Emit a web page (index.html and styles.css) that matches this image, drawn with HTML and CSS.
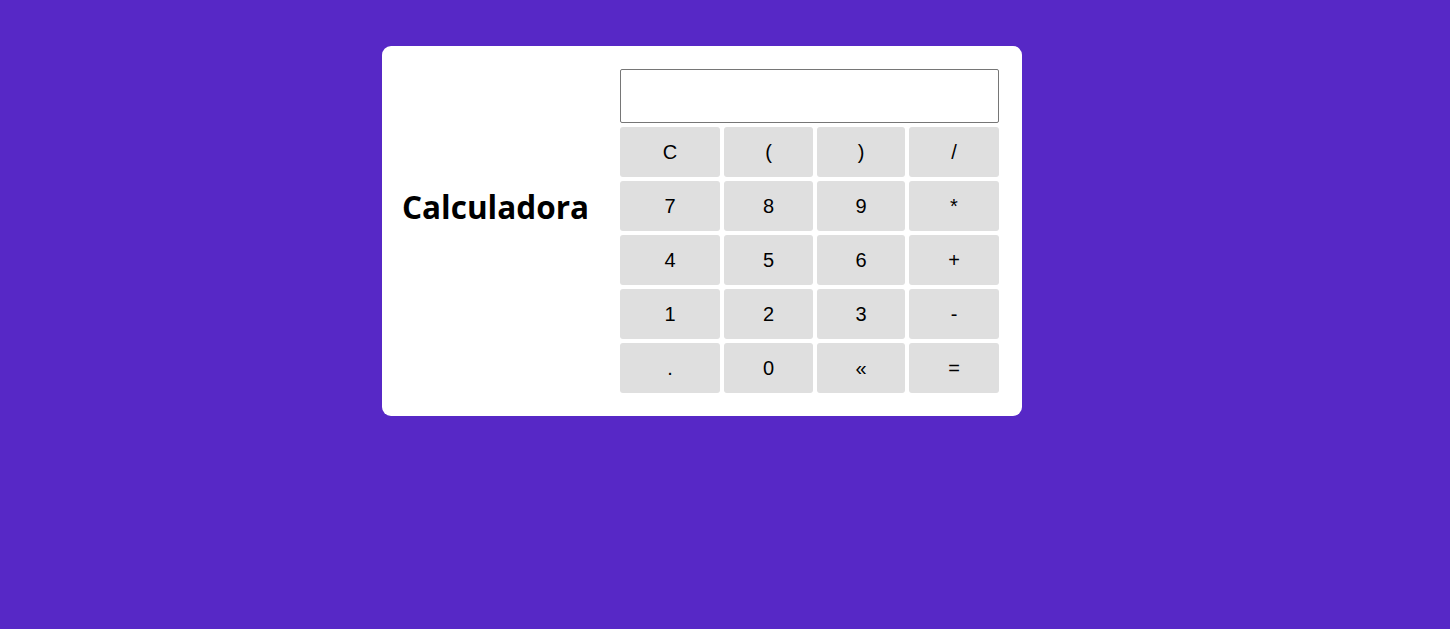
FILE: index.html
```html
<!DOCTYPE html>
<html lang="pt">
<head>
<meta charset="utf-8">
<title>Calculadora</title>
<link rel="stylesheet" href="styles.css">
</head>
<body>
<main class="card">
  <div class="side">
    <h1 class="title">Calculadora</h1>
  </div>
  <div class="calc">
    <input class="display" type="text" aria-label="Resultado">
    <div class="keys">
      <button class="key">C</button>
      <button class="key">(</button>
      <button class="key">)</button>
      <button class="key">/</button>
      <button class="key">7</button>
      <button class="key">8</button>
      <button class="key">9</button>
      <button class="key">*</button>
      <button class="key">4</button>
      <button class="key">5</button>
      <button class="key">6</button>
      <button class="key">+</button>
      <button class="key">1</button>
      <button class="key">2</button>
      <button class="key">3</button>
      <button class="key">-</button>
      <button class="key">.</button>
      <button class="key">0</button>
      <button class="key">&laquo;</button>
      <button class="key">=</button>
    </div>
  </div>
</main>
</body>
</html>
```

FILE: styles.css
```css
html, body {
  margin: 0;
  padding: 0;
}
body {
  background: #5728c6;
  min-height: 629px;
  font-family: "Open Sans", sans-serif;
  display: flex;
  justify-content: center;
  align-items: flex-start;
}
.card {
  margin-top: 46px;
  margin-left: -46px;
  width: 640px;
  box-sizing: border-box;
  background: #ffffff;
  border-radius: 9px;
  padding: 23px 23px 23px 20px;
  display: flex;
}
.side {
  width: 218px;
  flex: none;
}
.title {
  margin: 116px 0 0 0;
  font-family: "Open Sans", sans-serif;
  font-weight: 700;
  font-size: 31.5px;
  line-height: 43px;
  color: #000;
}
.calc {
  display: flex;
  flex-direction: column;
  gap: 4px;
}
.display {
  width: 379px;
  height: 54px;
  box-sizing: border-box;
  margin: 0;
  border: 1px solid #767676;
  border-radius: 2px;
  background: #fff;
  font-family: "Liberation Sans", Arial, sans-serif;
  font-size: 20px;
  padding: 0 6px;
}
.keys {
  display: grid;
  grid-template-columns: 100px 89px 88px 90px;
  grid-auto-rows: 50px;
  gap: 4px;
}
.key {
  margin: 0;
  border: none;
  border-radius: 3px;
  background: #dfdfdf;
  color: #000;
  font-family: "Liberation Sans", Arial, sans-serif;
  font-size: 20px;
  padding: 0;
}
```
